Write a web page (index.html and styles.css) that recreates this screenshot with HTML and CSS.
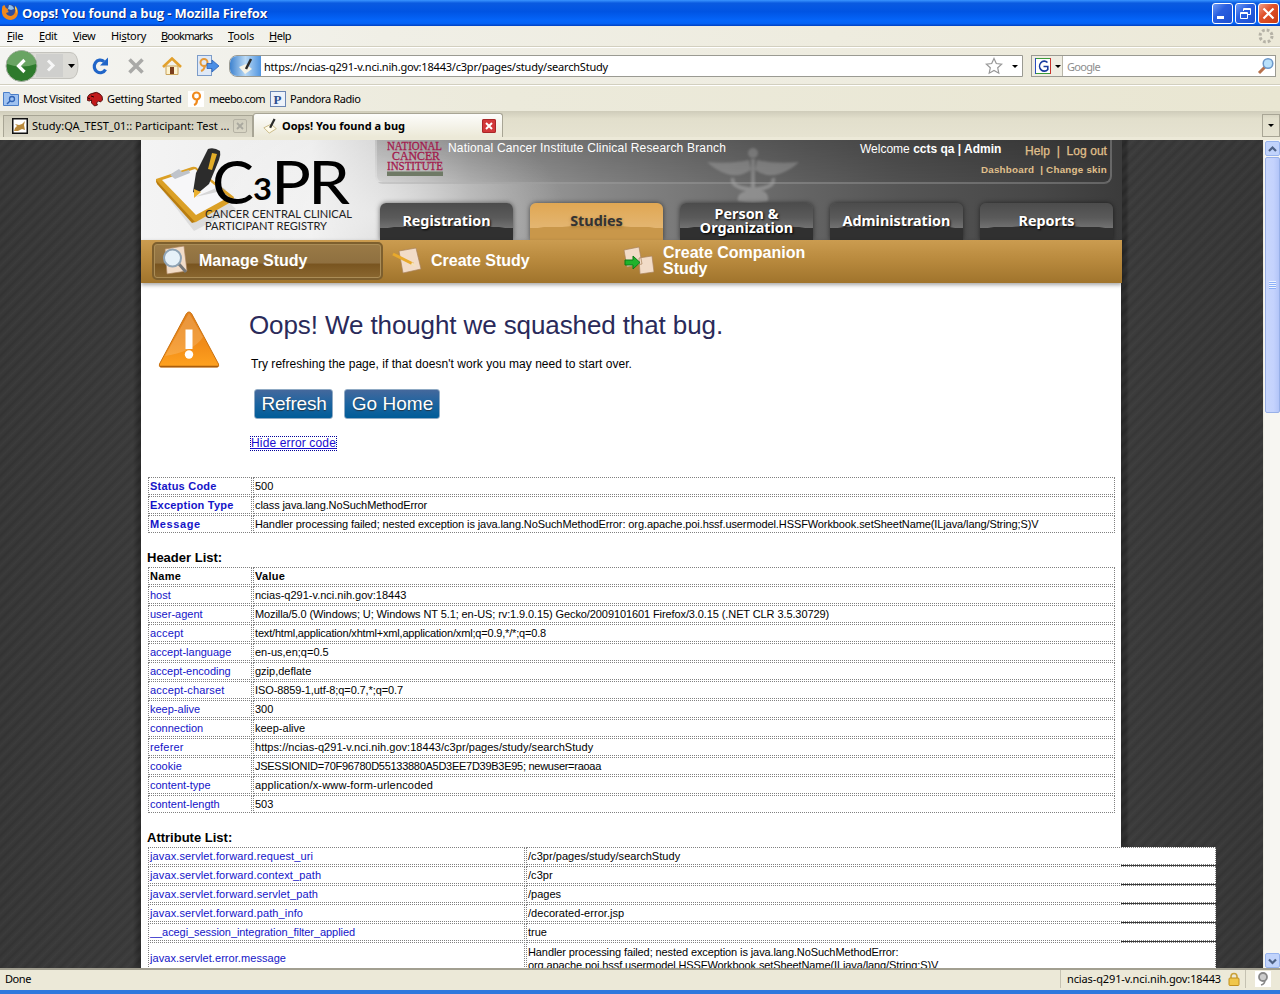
FILE: index.html
```html
<!DOCTYPE html>
<html lang="en">
<head>
<meta charset="utf-8">
<title>Oops! You found a bug</title>
<link rel="stylesheet" href="styles.css">
</head>
<body>
<div class="window">
  <header class="titlebar">
    <svg class="fx" width="18" height="18" viewBox="0 0 18 18"><circle cx="9" cy="9" r="7.500" fill="#2f4f9e"/><path d="M8 2q4 0 5 4l-3 1-3-1z" fill="#8fc0ee"/><path d="M1.500 3Q0 9 2 13q3 4 8 4 6-1 7-7 0-5-3-7 1 3 0 5 0 4-4 5-4 0-5-3l3-1q-2-1-1-3Q4 5 3.500 2z" fill="#f08a1d"/><path d="M14 3q3 3 1.500 8 0-4-1.500-5z" fill="#fbd34c"/></svg>
    <h1 class="win-title">Oops! You found a bug - Mozilla Firefox</h1>
    <div class="win-buttons">
      <span class="wb"><svg width="19" height="19"><rect x="4" y="12" width="7" height="3" fill="#fff"/></svg></span>
      <span class="wb"><svg width="19" height="19" fill="none" stroke="#fff" stroke-width="1"><path d="M7.500 7V4.500h7v6H12M7.500 5.500h7M4.500 8.500h7v6h-7zM4.500 9.500h7"/></svg></span>
      <span class="wb close"><svg width="19" height="19"><path d="M4.500 4.500l10 10M14.500 4.500l-10 10" stroke="#fff" stroke-width="2.200"/></svg></span>
    </div>
  </header>

  <nav class="menubar">
    <span class="mi m1"><u>F</u>ile</span><span class="mi m2"><u>E</u>dit</span><span class="mi m3"><u>V</u>iew</span><span class="mi m4">Hi<u>s</u>tory</span><span class="mi m5"><u>B</u>ookmarks</span><span class="mi m6"><u>T</u>ools</span><span class="mi m7"><u>H</u>elp</span>
    <svg class="throbber" width="16" height="16"><circle cx="8" cy="8" r="6" fill="none" stroke="#b5b2a6" stroke-width="3" stroke-dasharray="2.700 2.010"/></svg>
  </nav>

  <div class="navbar">
    <svg class="backfwd" width="78" height="34" viewBox="0 0 78 34">
      <path d="M14 3.500H68q8 0 8 13t-8 13H14z" fill="#dcdbd6" stroke="#c4c3bd"/>
      <rect x="34" y="5" width="27" height="23" fill="#cfcfcd"/>
      <path d="M46 11.500l5 5-5 5" fill="none" stroke="#f7f7f7" stroke-width="3"/>
      <path d="M66 15h7l-3.500 4z" fill="#000"/>
      <circle cx="19.500" cy="17" r="15.500" fill="#2d7a2c" stroke="#aab0a5"/>
      <path d="M5 15a14.500 13 0 0 1 29 0q-14 5-29 0z" fill="#7db376" opacity=".75"/>
      <path d="M22.500 11l-6 6 6 6" fill="none" stroke="#fff" stroke-width="3.200"/>
    </svg>
    <svg class="nb-reload" width="18" height="18" viewBox="0 0 18 18"><path d="M13 4.500A6 6.300 0 1 0 14.500 12.500" fill="none" stroke="#2065c8" stroke-width="3.200"/><path d="M17 .5v8H9z" fill="#2065c8"/></svg>
    <svg class="nb-stop" width="18" height="18"><path d="M2.500 2.500l13 13M15.500 2.500l-13 13" stroke="#a9a9a7" stroke-width="3.600"/></svg>
    <svg class="nb-home" width="20" height="18" viewBox="0 0 20 18"><path d="M4 9h12v8.500H4z" fill="#fdf3cf" stroke="#c9a25a"/><path d="M1 10L10 1.500 19 10" fill="none" stroke="#e2a02c" stroke-width="2.600"/><rect x="8" y="10" width="4" height="7" fill="#7b3f1d"/></svg>
    <svg class="nb-meebo" width="24" height="24" viewBox="0 0 24 24"><rect x="1.500" y="1.500" width="14" height="20" fill="#dfe9f7" stroke="#7c9cc9"/><circle cx="8" cy="8.500" r="3.500" fill="none" stroke="#e59a3a" stroke-width="2"/><path d="M9 12q-1 4-4 5" fill="none" stroke="#e59a3a" stroke-width="2"/><path d="M11 9.500h5V6l7 6-7 6v-3.500h-5z" fill="#4b8fe6" stroke="#2a62b8" stroke-width=".8"/></svg>
    <div class="urlbar">
      <span class="favbox"><svg width="18" height="18" viewBox="0 0 18 18"><path d="M2 10l7-3 6 5-7 5z" fill="#f6f3e6"/><path d="M14 2L9 12" stroke="#2b2b2b" stroke-width="2.500"/></svg></span>
      <span class="url">https://ncias-q291-v.nci.nih.gov:18443/c3pr/pages/study/searchStudy</span>
      <svg class="star" width="18" height="18" viewBox="0 0 18 18"><path d="M9 1.500l2.300 5 5.400.6-4 3.700 1.100 5.400L9 13.500l-4.800 2.700 1.100-5.400-4-3.700 5.400-.6z" fill="#fff" stroke="#979797" stroke-width="1.200"/></svg>
      <i class="caret url-caret"></i>
    </div>
    <div class="searchbar">
      <span class="engine"><svg width="16" height="16"><rect x=".5" y=".5" width="15" height="15" fill="#fff" stroke="#3a9a3a"/><path d="M.5 0v16" stroke="#2a4cc0"/><path d="M15.500 0v16" stroke="#c8342c"/><path d="M12.500 4.500A4.700 5 0 1 0 12.800 11.500V8.500H8.500" fill="none" stroke="#173a9e" stroke-width="1.600"/></svg><i class="caret"></i></span>
      <span class="ph">Google</span>
      <svg class="mag" width="18" height="18"><path d="M2 16l6-6" stroke="#b7714c" stroke-width="3"/><circle cx="11" cy="6.500" r="4.800" fill="#b9e0fa" stroke="#6b97c9" stroke-width="1.500"/></svg>
    </div>
  </div>

  <div class="bookmarks">
    <span class="bm b1"><svg width="16" height="16"><path d="M.5 1.500h6l1 2h8v11H.5z" fill="#9fc2f0" stroke="#4a7ec9"/><circle cx="9" cy="8" r="2.500" fill="none" stroke="#2f62b5" stroke-width="1.300"/><path d="M7 10l-3 3" stroke="#2f62b5" stroke-width="1.500"/></svg>Most Visited</span>
    <span class="bm b2"><svg width="16" height="16"><path d="M0 8Q1 3 5 2.500 10 0 13 3q3 2 2.500 6l-2 2-2-1-2 2 1 2-3 1-3-3 0-3-2 1-2-.5z" fill="#c21a1a" stroke="#3a0000" stroke-width=".8"/><path d="M4 5l3 1M1 7l2 1" stroke="#200"/></svg>Getting Started</span>
    <span class="bm b3"><svg width="16" height="16"><rect width="16" height="16" fill="#fff"/><circle cx="8.500" cy="5" r="3.500" fill="none" stroke="#f08a1d" stroke-width="2.200"/><path d="M9 9q0 4-3 5" fill="none" stroke="#f08a1d" stroke-width="2.200"/></svg>meebo.com</span>
    <span class="bm b4"><svg width="16" height="16"><rect x=".5" y=".5" width="15" height="15" fill="#edf2fa" stroke="#6b86b4"/><text x="3.500" y="12.500" class="pico">P</text></svg>Pandora Radio</span>
  </div>

  <div class="tabstrip">
    <div class="tab t1"><svg width="16" height="16"><rect x=".75" y=".75" width="14.500" height="14.500" fill="#fff" stroke="#111" stroke-width="1.500"/><path d="M2 13l1-3 2-2-2-2 4 1 3-1 3-3-1 4 1 5-3-1-4 2z" fill="#b98a3c"/></svg><span class="tt">Study:QA_TEST_01:: Participant: Test ...</span><span class="x off"><svg width="14" height="14"><path d="M4 4l6 6M10 4l-6 6" stroke="#aaa99f" stroke-width="1.800"/></svg></span></div>
    <div class="tab t2"><svg width="18" height="16" viewBox="0 0 18 18"><path d="M1 11l8-4 6 5-8 5z" fill="#fffbe9" stroke="#c6b580"/><path d="M13 1L8 11" stroke="#2b2b2b" stroke-width="2.500"/></svg><span class="tt">Oops! You found a bug</span><span class="x on"><svg width="14" height="14"><path d="M4 4l6 6M10 4l-6 6" stroke="#fff" stroke-width="2"/></svg></span></div>
    <div class="alltabs"><i class="caret"></i></div>
  </div>

  <div class="viewport">
    <div class="canvas">
      <main class="page">
        <div class="banner">
          <svg class="logo" width="230" height="100" viewBox="0 0 230 100">
            <path d="M18 46l36-15 41 38-42 22z" fill="#8a8a8a" opacity=".2"/>
            <path d="M15 39l36-12q4-1 6 2l36 28q0 3-3 5L55 82q-3 1-5-2L15 42z" fill="#dba026"/>
            <path d="M15 40l1 4 35 39 3-1z" fill="#b97d10"/>
            <path d="M21 40l33-11 34 28-33 18z" fill="#f7f7f9"/>
            <path d="M29 35l4-3 5-3 3 3 7-2 1 3-15 6z" fill="#bfc3ca"/>
            <path d="M67 9q6-2 12 2 1 4-1 9L68 44 56 54l-4-2 3-19z" fill="#2c2c2c"/>
            <path d="M71 13l5 1-5 16-4-1z" fill="#e2ad28"/>
            <path d="M53 49l7 3-7 6z" fill="#eab030"/>
            <path d="M54 57l26-11 5 4z" fill="#999" opacity=".35"/>
            <text class="lg-c" x="71" y="64" textLength="42" lengthAdjust="spacingAndGlyphs">C</text>
            <text class="lg-3" x="112" y="60" textLength="19" lengthAdjust="spacingAndGlyphs">3</text>
            <text class="lg-c" x="130" y="64" textLength="40" lengthAdjust="spacingAndGlyphs">P</text>
            <text class="lg-c" x="167" y="64" textLength="42" lengthAdjust="spacingAndGlyphs">R</text>
            <text class="lg-s" x="64" y="78" textLength="147" lengthAdjust="spacingAndGlyphs">CANCER CENTRAL CLINICAL</text>
            <text class="lg-s" x="64" y="90" textLength="122" lengthAdjust="spacingAndGlyphs">PARTICIPANT REGISTRY</text>
          </svg>
          <div class="banner-main">
            <div class="info">
              <svg class="nci" width="58" height="38"><g class="nci-t"><text x="0" y="10" textLength="55" lengthAdjust="spacingAndGlyphs">NATIONAL</text><text x="5" y="20" textLength="48" lengthAdjust="spacingAndGlyphs">CANCER</text><text x="0" y="30" textLength="56" lengthAdjust="spacingAndGlyphs">INSTITUTE</text></g><rect x="0" y="31.500" width="56" height="4.500" fill="#6f7a66"/></svg>
              <span class="org">National Cancer Institute Clinical Research Branch</span>
              <div class="user">Welcome <b>ccts qa | Admin</b></div>
              <div class="links"><div class="l1">Help&nbsp; |&nbsp; Log out</div><div class="l2">Dashboard&nbsp; | Change skin</div></div>
            </div>
            <svg class="caduceus" width="96" height="62" viewBox="0 0 96 62"><g fill="none" stroke="#c5c5c5" stroke-width="4"><path d="M48 14v44"/><path d="M28 33q-2 7 9 10t22 0 9-10"/></g><path d="M33 56q-2-10 15-11t15 11q-15 4-30 0z" fill="#c5c5c5"/><circle cx="48" cy="8" r="5" fill="#c5c5c5"/><path d="M2 17q24 2 42-2l2 10q-12 8-24 4Q10 25 2 17zM94 17q-24 2-42-2l-2 10q12 8 24 4 12-4 20-12z" fill="#c5c5c5"/></svg>
            <div class="tabs">
              <div class="mt">Registration</div>
              <div class="mt sel">Studies</div>
              <div class="mt two"><span>Person &amp;</span><span>Organization</span></div>
              <div class="mt">Administration</div>
              <div class="mt">Reports</div>
            </div>
          </div>
        </div>

        <div class="subnav">
          <div class="sn cur"><svg width="32" height="32" viewBox="0 0 32 32"><path d="M6 4l19-3 3 25-20 3z" fill="#f2dcc8" stroke="#a9825c" stroke-width=".7"/><path d="M19 18l8 9" stroke="#777" stroke-width="3"/><circle cx="13.500" cy="13" r="8.500" fill="#e6f1f8" stroke="#8fa3b4" stroke-width="2"/></svg><span>Manage Study</span></div>
          <div class="sn"><svg width="32" height="32" viewBox="0 0 32 32"><path d="M9 6l17-3 5 21-18 4z" fill="#f2dcc8" stroke="#a9825c" stroke-width=".7"/><path d="M3 9l20 10" stroke="#e8a92c" stroke-width="3"/><path d="M22 17l5 5-6-2z" fill="#f5e4bd"/></svg><span>Create Study</span></div>
          <div class="sn"><svg width="32" height="32" viewBox="0 0 32 32"><path d="M2 5l15-3 3 17-15 3zM17 13l13-2 2 16-14 2z" fill="#f2dcc8" stroke="#a9825c" stroke-width=".7"/><path d="M3 15h8v-4l7 6.500-7 6.500v-4H3z" fill="#1fb32b" stroke="#0c7a17"/></svg><span>Create Companion<br>Study</span></div>
        </div>

        <section class="oops">
          <svg class="warn" width="64" height="60" viewBox="0 0 64 60"><defs><linearGradient id="wg" x1="0" y1="0" x2="0" y2="1"><stop offset="0" stop-color="#e2801a"/><stop offset=".6" stop-color="#f28d18"/><stop offset="1" stop-color="#ffa21f"/></linearGradient></defs><path d="M32 2q1.500 0 2.500 1.500L61.500 54q1 3-1.500 3h-56q-2.500 0-1.500-3L29.500 3.500Q30.500 2 32 2z" fill="url(#wg)" stroke="#c9700f" stroke-width="1"/><path d="M32 3L8 46q28-4 38-19z" fill="#fff" opacity=".16"/><path d="M3 56.500h58" stroke="#a95d0d" stroke-width="1.500"/><rect x="28.500" y="19.500" width="7" height="19.500" fill="#fff"/><circle cx="32" cy="44.500" r="4.200" fill="#fff"/></svg>
          <div class="oops-body">
            <h2>Oops! We thought we squashed that bug.</h2>
            <p>Try refreshing the page, if that doesn't work you may need to start over.</p>
            <div class="btns"><button class="btn r">Refresh</button><button class="btn g">Go Home</button></div>
            <a class="hide" href="#">Hide error code</a>
          </div>
        </section>

        <table class="grid heads">
          <tr><td><b>Status Code</b></td><td>500</td></tr>
          <tr><td><b>Exception Type</b></td><td class="tight">class java.lang.NoSuchMethodError</td></tr>
          <tr><td><b class="msg">Message</b></td><td class="tight">Handler processing failed; nested exception is java.lang.NoSuchMethodError: org.apache.poi.hssf.usermodel.HSSFWorkbook.setSheetName(ILjava/lang/String;S)V</td></tr>
        </table>

        <h3>Header List:</h3>
        <table class="grid">
          <tr class="th"><td><b>Name</b></td><td><b>Value</b></td></tr>
          <tr><td>host</td><td>ncias-q291-v.nci.nih.gov:18443</td></tr>
          <tr><td>user-agent</td><td class="tight">Mozilla/5.0 (Windows; U; Windows NT 5.1; en-US; rv:1.9.0.15) Gecko/2009101601 Firefox/3.0.15 (.NET CLR 3.5.30729)</td></tr>
          <tr><td class="loose">accept</td><td class="tighter">text/html,application/xhtml+xml,application/xml;q=0.9,*/*;q=0.8</td></tr>
          <tr><td>accept-language</td><td>en-us,en;q=0.5</td></tr>
          <tr><td>accept-encoding</td><td>gzip,deflate</td></tr>
          <tr><td class="loose">accept-charset</td><td class="tight">ISO-8859-1,utf-8;q=0.7,*;q=0.7</td></tr>
          <tr><td>keep-alive</td><td>300</td></tr>
          <tr><td>connection</td><td>keep-alive</td></tr>
          <tr><td class="loose">referer</td><td class="url-value">https://ncias-q291-v.nci.nih.gov:18443/c3pr/pages/study/searchStudy</td></tr>
          <tr><td>cookie</td><td class="tightest">JSESSIONID=70F96780D55133880A5D3EE7D39B3E95; newuser=raoaa</td></tr>
          <tr><td>content-type</td><td class="loose">application/x-www-form-urlencoded</td></tr>
          <tr><td>content-length</td><td>503</td></tr>
        </table>

        <h3>Attribute List:</h3>
        <table class="grid attrs">
          <tr><td>javax.servlet.forward.request_uri</td><td class="url-value">/c3pr/pages/study/searchStudy</td></tr>
          <tr><td>javax.servlet.forward.context_path</td><td class="url-value">/c3pr</td></tr>
          <tr><td>javax.servlet.forward.servlet_path</td><td>/pages</td></tr>
          <tr><td>javax.servlet.forward.path_info</td><td class="url-value">/decorated-error.jsp</td></tr>
          <tr><td class="acegi">__acegi_session_integration_filter_applied</td><td>true</td></tr>
          <tr><td class="err">javax.servlet.error.message</td><td class="tight">Handler processing failed; nested exception is java.lang.NoSuchMethodError:<br>org.apache.poi.hssf.usermodel.HSSFWorkbook.setSheetName(ILjava/lang/String;S)V</td></tr>
        </table>
      </main>
    </div>
    <div class="scroll">
      <span class="sb"><svg width="13" height="14"><path d="M3 9l3.500-3.500L10 9" fill="none" stroke="#4d6185" stroke-width="2.200"/></svg></span>
      <span class="thumb"><i></i></span>
      <span class="track"></span>
      <span class="sb"><svg width="13" height="14"><path d="M3 5.500L6.500 9 10 5.500" fill="none" stroke="#4d6185" stroke-width="2.200"/></svg></span>
    </div>
  </div>

  <footer class="status">
    <span class="done">Done</span>
    <span class="host">ncias-q291-v.nci.nih.gov:18443<svg width="12" height="14"><path d="M3 7V4.500a3 3 0 0 1 6 0V7" fill="none" stroke="#c9a13a" stroke-width="1.600"/><rect x="1" y="6" width="10" height="7.500" rx="1" fill="#f0c64a" stroke="#c08f1e"/></svg></span>
    <span class="mb"><svg width="16" height="16"><rect width="16" height="16" fill="#fff"/><circle cx="8" cy="6" r="4" fill="#ccc" stroke="#888" stroke-width="1.800"/><path d="M10 9q0 4-4 5" fill="none" stroke="#888" stroke-width="1.600"/></svg></span>
  </footer>
</div>
</body>
</html>
```
FILE: styles.css
```css
* { box-sizing: border-box; }
body { margin: 0; overflow: hidden; font-family: "Liberation Sans", Arial, sans-serif; }
svg { display: block; flex: none; }
.window { width: 1280px; height: 994px; display: flex; flex-direction: column; background: #ece9d8; border-bottom: 4px solid #2f78dd; overflow: hidden; font: 11px/14px "Noto Sans", Tahoma, sans-serif; color: #000; white-space: nowrap; }

/* Window title */
.titlebar { height: 26px; flex: none; display: flex; align-items: center; padding-left: 1px; background: linear-gradient(#3a95ff 0, #0a5ae0 12%, #0054e3 45%, #0566fb 80%, #0563f5 90%, #0140c0 100%); }
.fx { margin: -3px 3px 0 0; }
.win-title { margin: 0; font: bold 13px/18px "Open Sans", "Trebuchet MS", sans-serif; letter-spacing: -.164px; color: #fff; text-shadow: 1px 1px 0 #0a2a80; flex: 1; }
.win-buttons { display: flex; gap: 2px; padding-right: 1px; }
.wb { width: 21px; height: 21px; border: 1px solid #fff; border-radius: 3px; background: linear-gradient(135deg, #6f9bf5, #2a5fe0 40%, #1c4fd0); }
.wb.close { background: linear-gradient(135deg, #f0a08a, #e0522c 40%, #c83a12); }

/* Menus and toolbars */
.menubar { height: 21px; flex: none; display: flex; align-items: center; padding-left: 7px; background: linear-gradient(90deg, #f6f6f4, #f0efe6 30%, #ece9d8); border-bottom: 1px solid #d2cfbf; }
.mi { flex: none; }
.m1 { width: 32px; letter-spacing: -.35px; }
.m2 { width: 34px; letter-spacing: -.4px; }
.m3 { width: 38px; letter-spacing: -.5px; }
.m4 { width: 50px; letter-spacing: -.3px; }
.m5 { width: 67px; letter-spacing: -.8px; }
.m6 { width: 41px; letter-spacing: -.15px; }
.m7 { letter-spacing: -.45px; }
.throbber { margin-left: auto; margin-right: 6px; }
.navbar { height: 38px; flex: none; display: flex; align-items: center; border-top: 1px solid #fff; border-bottom: 1px solid #d2cfbf; background: linear-gradient(90deg, #f4f4f1, #f0efe7 30%, #ece9d8); }
.backfwd { margin-left: 2px; }
.nb-reload { margin-left: 11px; }
.nb-stop { margin-left: 18px; }
.nb-home { margin-left: 17px; }
.nb-meebo { margin-left: 14px; }
.urlbar { margin-left: 9px; width: 794px; height: 22px; border: 1px solid #9a9a92; background: #fff; display: flex; align-items: center; border-radius: 8px 0 0 8px; overflow: hidden; }
.favbox { width: 31px; height: 20px; background: linear-gradient(90deg, #3f83cf, #b9d9f5 50%, #4f94e0); display: flex; justify-content: center; align-items: center; margin-right: 3px; }
.url { width: 721px; letter-spacing: -.203px; padding-top: 1px; }
.caret { border: 3px solid transparent; border-top-color: #000; border-bottom: 0; width: 0; height: 0; flex: none; }
.url-caret { margin-left: 9px; }
.searchbar { margin-left: 8px; width: 245px; height: 22px; border: 1px solid #9a9a92; background: #fff; display: flex; align-items: center; }
.engine { width: 31px; height: 20px; display: flex; align-items: center; gap: 4px; padding-left: 3px; background: #efede2; border-right: 1px solid #b9b6a8; margin-right: 4px; }
.ph { color: #8e8e8e; flex: 1; letter-spacing: -.7px; padding-top: 1px; }
.bookmarks { height: 26px; flex: none; display: flex; align-items: center; padding-left: 3px; border-top: 1px solid #fff; background: linear-gradient(90deg, #f1f0e9, #eceadb 40%, #e9e6d2); }
.bm { display: flex; gap: 4px; align-items: center; }
.b1 { width: 84px; letter-spacing: -.48px; }
.b2 { width: 101px; letter-spacing: -.31px; }
.b3 { width: 82px; gap: 5px; letter-spacing: -.6px; }
.b4 { letter-spacing: -.4px; }
.pico { font: bold 13px "Liberation Serif", serif; fill: #2d4f8e; }

/* Browser tabs */
.tabstrip { height: 29px; flex: none; display: flex; align-items: flex-end; padding-left: 3px; background: linear-gradient(#cfccba, #e2dfcc 30%, #e6e3d1); border-bottom: 3px solid #ece9d8; }
.tab { display: flex; align-items: center; border: 1px solid #a8a595; border-bottom: 0; }
.t1 { width: 250px; height: 22px; padding: 0 8px 1px; gap: 4px; background: linear-gradient(#cfccbb, #dcd9c8); }
.t2 { width: 250px; height: 24px; padding: 0 6px 0 8px; gap: 2px; font-weight: bold; background: linear-gradient(#fdfdfb, #ece9d8); border-radius: 3px 3px 0 0; }
.tt { flex: 1; }
.x { width: 14px; height: 14px; border-radius: 2px; flex: none; }
.x.off { border: 1px solid #b5b2a4; }
.x.off svg { margin: -1px; }
.x.on { background: #d2383a; box-shadow: inset 0 0 0 1px #a82628; }
.alltabs { margin-left: auto; width: 18px; height: 23px; border: 1px solid #a8a595; display: flex; align-items: center; justify-content: center; }

/* Page area */
.viewport { height: 828px; flex: none; display: flex; font-family: "Liberation Sans", Arial, sans-serif; }
.canvas { width: 1263px; height: 828px; overflow: hidden; padding-left: 141px; background: repeating-linear-gradient(135deg, #fff0 0, #ffffff0a 4.243px, #fff0 8.485px), linear-gradient(90deg, #333 0, #373737 133px, #272727 139px, #272727 1122px, #292929 1126px, #373737 1129px, #333 1263px); }
.page { width: 980px; height: 828px; background: #fff; }
.banner { width: 981px; height: 100px; display: flex; background: radial-gradient(ellipse 190px 110px at 235px 75px, rgba(255,255,255,.5), transparent), linear-gradient(90deg, #f4f4f4 0, #ececec 170px, #d2d2d2 235px, #a5a5a5 330px, #878787 460px, #6b6b6b 620px, #555 760px, #474747 900px, #3b3b3b 981px); }
.logo { margin-right: 4px; }
.lg-c { font: 60px Lato, sans-serif; }
.lg-3 { font: bold 31px Lato, sans-serif; }
.lg-s { font: 12px Lato, sans-serif; fill: #222; }
.banner-main { width: 747px; display: flex; flex-direction: column; justify-content: space-between; position: relative; }
.info { width: 737px; height: 44px; display: flex; border: 2px solid rgba(255,255,255,.25); border-top: 0; border-radius: 0 0 8px 8px; background: linear-gradient(rgba(0,0,0,.2), rgba(0,0,0,.06)); padding-left: 10px; color: #fff; position: relative; z-index: 1; }
.nci { margin-right: 3px; }
.nci-t { font: 13px "Liberation Serif", serif; fill: #a3194c; stroke: #a3194c; stroke-width: .3px; }
.org { font-size: 12px; line-height: 16px; width: 412px; letter-spacing: .171px; }
.user { font-size: 12px; line-height: 18px; width: 120px; }
.links { flex: 1; color: #e0c08c; text-align: right; padding-right: 3px; }
.l1 { font-size: 12px; line-height: 22px; letter-spacing: .05px; -webkit-text-stroke: .25px #e0c08c; }
.l2 { font: bold 9.800px/15px "Liberation Sans", sans-serif; letter-spacing: .24px; }
.caduceus { position: absolute; left: 330px; top: 5px; opacity: .38; filter: blur(1px); }
.tabs { display: flex; gap: 17px; padding-left: 5px; position: relative; }
.mt { width: 133px; height: 37px; border-radius: 6px 6px 0 0; background: radial-gradient(ellipse 130px 14px at 50% 100%, #303030 0 98%, transparent 100%), linear-gradient(#4c4c4c, #5a5a5a 40%, #787878 75%); box-shadow: 0 0 5px rgba(0,0,0,.55); display: flex; flex-direction: column; align-items: center; font: bold 14.400px/36px "Noto Sans", sans-serif; letter-spacing: -.03px; color: #fff; text-shadow: 1px 1px 2px #000; }
.mt.sel { background: radial-gradient(ellipse 130px 14px at 50% 100%, #c9974a 0 98%, transparent 100%), linear-gradient(#e0a753, #e3b46e 60%, #e3b878); color: #333; text-shadow: 0 1px 3px rgba(120,80,20,.5); }
.mt.two { line-height: 14px; padding-top: 4px; }
.subnav { width: 981px; height: 43px; display: flex; padding-left: 11px; background: linear-gradient(#cb9c50, #b98a3e 45%, #a0742c); box-shadow: 0 2px 4px rgba(0,0,0,.35); font-weight: bold; font-size: 16px; line-height: 16px; color: #fff; position: relative; }
.sn { width: 232px; display: flex; align-items: center; gap: 9px; padding: 0 0 2px 6px; }
.sn.cur { background: linear-gradient(#9a7a46, #8f7040 55%, #795520 60%, #8a6730); border: 2px solid #7d5f2e; box-shadow: inset 0 0 0 1px #ab8d57; border-radius: 5px; height: 38px; margin: 2px 1px 0 0; width: 231px; gap: 8px; padding: 0 0 0 5px; }

/* Error message */
.oops { display: flex; height: 193px; padding: 27px 0 0 16px; }
.oops-body { padding-left: 28px; }
h2 { margin: 0; font-weight: normal; font-size: 26px; line-height: 30px; letter-spacing: -.104px; color: #2a2a5a; }
p { margin: 16px 0 0 2px; font-size: 12px; line-height: 16px; letter-spacing: .04px; }
.btns { display: flex; gap: 11px; padding: 17px 0 0 5px; }
.btn { height: 30px; border: 1px solid #8faac4; border-radius: 3px; background: linear-gradient(#44689c, #1c64a0 50%, #005c98); color: #fff; font: 19px/28px "Liberation Sans", Arial, sans-serif; padding: 0 0 0 1px; text-shadow: 0 1px 1px #234; }
.btn.r { width: 79px; letter-spacing: -.2px; }
.btn.g { width: 96px; letter-spacing: .05px; }
.hide { display: inline-block; margin: 17px 0 0 1px; font-size: 12px; line-height: 15px; letter-spacing: .15px; padding: 0 1px; outline: 1px dotted #00009a; outline-offset: -1px; color: #1a0dcf; }

/* Detail tables */
.grid { table-layout: fixed; width: 969px; margin-left: 6px; border-collapse: separate; border-spacing: 1px; font-size: 11px; line-height: 13px; }
.grid td { height: 18px; padding: 0 1px; border: 1px dotted #808080; background: #fff; overflow: hidden; }
.grid td:first-child { width: 104px; color: #1414c8; }
.heads b { letter-spacing: .22px; }
.heads .msg { letter-spacing: .6px; }
.grid .th td:first-child { color: #000; }
.th b { letter-spacing: .3px; }
.grid.attrs { width: 1070px; }
.grid.attrs td:first-child { width: 377px; letter-spacing: .125px; }
.grid.attrs td.acegi:first-child { letter-spacing: -.07px; }
.grid.attrs td.err:first-child { letter-spacing: .056px; }
.grid.attrs tr:last-child td { height: 33px; }
.tight { letter-spacing: -.1px; }
.tighter { letter-spacing: -.18px; }
.tightest { letter-spacing: -.276px; }
.loose { letter-spacing: .17px; }
.url-value { letter-spacing: .04px; }
h3 { margin: 16px 0 0 6px; font-size: 13px; line-height: 16px; }

/* Scrollbar and status bar */
.scroll { width: 17px; height: 828px; display: flex; flex-direction: column; background: #f7f6f2; padding: 1px 1px 0 1px; border-left: 1px solid #eeede5; align-items: center; }
.sb { width: 15px; height: 15px; border-radius: 2px; background: #c1d3fb; border: 1px solid #98b4ee; flex: none; }
.thumb { width: 15px; height: 256px; margin-top: 1px; border-radius: 2px; border: 1px solid #98b0e8; background: linear-gradient(90deg, #c9d7fc, #c4d2fd 60%, #b3c5f8); display: flex; justify-content: center; align-items: center; flex: none; }
.thumb i { width: 7px; height: 8px; background: repeating-linear-gradient(#eef4fe 0 1px, #8cb0f8 1px 2px); }
.track { flex: 1; }
.status { height: 22px; flex: none; display: flex; align-items: center; padding: 0 0 2px 5px; border-top: 2px solid #a29f90; }
.done { flex: 1; letter-spacing: -.42px; }
.host { width: 185px; height: 18px; border-left: 1px solid #c5c2b2; display: flex; align-items: center; gap: 7px; padding-left: 6px; letter-spacing: -.121px; }
.mb { width: 35px; height: 18px; border-left: 1px solid #c5c2b2; padding: 1px 0 0 9px; }
```
